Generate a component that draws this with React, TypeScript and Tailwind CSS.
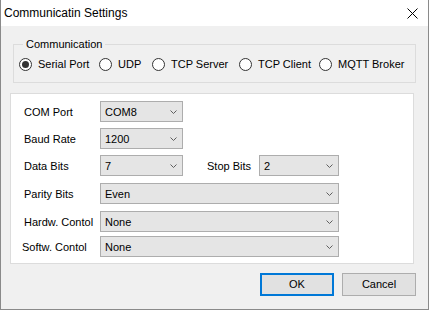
import React from "react";

const font = { fontFamily: '"Liberation Sans", Arial, sans-serif' };

const Chevron = () => (
  <svg width="7" height="4" viewBox="0 0 7 4" className="shrink-0">
    <polyline points="0.5,0.5 3.5,3.5 6.5,0.5" fill="none" stroke="#5f5f5f" strokeWidth="1" />
  </svg>
);

const Combo = ({ value, width }: { value: string; width: string }) => (
  <div
    className={`${width} h-[21px] shrink-0 flex items-center justify-between bg-[#e5e5e5] border border-[#adadad] pl-[4px] pr-[5px] text-[11px] leading-[13px] text-black`}
  >
    <span className="pt-[1px]">{value}</span>
    <Chevron />
  </div>
);

const Radio = ({ label, checked, width }: { label: string; checked?: boolean; width: string }) => (
  <div className={`${width} shrink-0 flex items-center gap-[6px]`}>
    <div className="w-[13px] h-[13px] rounded-full border border-[#333333] bg-white flex items-center justify-center shrink-0">
      {checked && <div className="w-[7px] h-[7px] rounded-full bg-[#333333]"></div>}
    </div>
    <span className="text-[11px] leading-[13px] text-black whitespace-nowrap">{label}</span>
  </div>
);

const Row = ({ label, mt, children, shift }: { label: string; mt: string; children: React.ReactNode; shift?: boolean }) => (
  <div className={`flex items-center h-[21px] ${mt}`}>
    <span className={`w-[76px] shrink-0 text-[11px] leading-[13px] pt-[2px] text-black whitespace-nowrap ${shift ? "-ml-[2px] pr-[2px] w-[78px]" : ""}`}>
      {label}
    </span>
    {children}
  </div>
);

export default function App() {
  return (
    <div style={font} className="w-[429px] h-[310px] bg-[#f0f0f0] border-x border-b border-[#8a8a8a] flex flex-col">
      {/* Title bar */}
      <div className="h-[26px] shrink-0 bg-white flex items-center justify-between pl-[3px] pr-[10px]">
        <span className="text-[12px] leading-[14px] text-black">Communicatin Settings</span>
        <svg width="11" height="11" viewBox="0 0 11 11">
          <line x1="0.5" y1="0.5" x2="10.5" y2="10.5" stroke="#000" strokeWidth="1" />
          <line x1="10.5" y1="0.5" x2="0.5" y2="10.5" stroke="#000" strokeWidth="1" />
        </svg>
      </div>

      {/* Communication group */}
      <fieldset className="ml-[12px] mt-[12px] w-[403px] border border-[#dcdcdc] pl-[5px] pt-[7px] pb-[11px]">
        <legend className="ml-[4px] px-[3px] text-[11px] leading-[13px] text-black">Communication</legend>
        <div className="flex items-center">
          <Radio label="Serial Port" checked width="w-[80px]" />
          <Radio label="UDP" width="w-[53px]" />
          <Radio label="TCP Server" width="w-[87px]" />
          <Radio label="TCP Client" width="w-[80px]" />
          <Radio label="MQTT Broker" width="w-[90px]" />
        </div>
      </fieldset>

      {/* Serial settings panel */}
      <div className="ml-[9px] mt-[10px] w-[404px] h-[171px] bg-white border border-[#dcdcdc] pl-[13px] pt-[7px] flex flex-col">
        <Row label="COM Port" mt="mt-0">
          <Combo value="COM8" width="w-[83px]" />
        </Row>
        <Row label="Baud Rate" mt="mt-[6px]">
          <Combo value="1200" width="w-[83px]" />
        </Row>
        <Row label="Data Bits" mt="mt-[6px]">
          <Combo value="7" width="w-[83px]" />
          <span className="ml-[24px] w-[52px] shrink-0 text-[11px] leading-[13px] pt-[2px] text-black">Stop Bits</span>
          <Combo value="2" width="w-[80px]" />
        </Row>
        <Row label="Parity Bits" mt="mt-[7px]">
          <Combo value="Even" width="w-[239px]" />
        </Row>
        <Row label="Hardw. Contol" mt="mt-[7px]">
          <Combo value="None" width="w-[239px]" />
        </Row>
        <Row label="Softw. Contol" mt="mt-[4px]" shift>
          <Combo value="None" width="w-[239px]" />
        </Row>
      </div>

      {/* Buttons */}
      <div className="mt-[9px] flex justify-end gap-[8px] pr-[12px]">
        <button className="w-[74px] h-[23px] bg-[#e1e1e1] border-2 border-[#0078d7] text-[11px] leading-[13px] text-black">
          OK
        </button>
        <button className="w-[74px] h-[23px] bg-[#e1e1e1] border border-[#adadad] text-[11px] leading-[13px] text-black">
          Cancel
        </button>
      </div>
    </div>
  );
}
